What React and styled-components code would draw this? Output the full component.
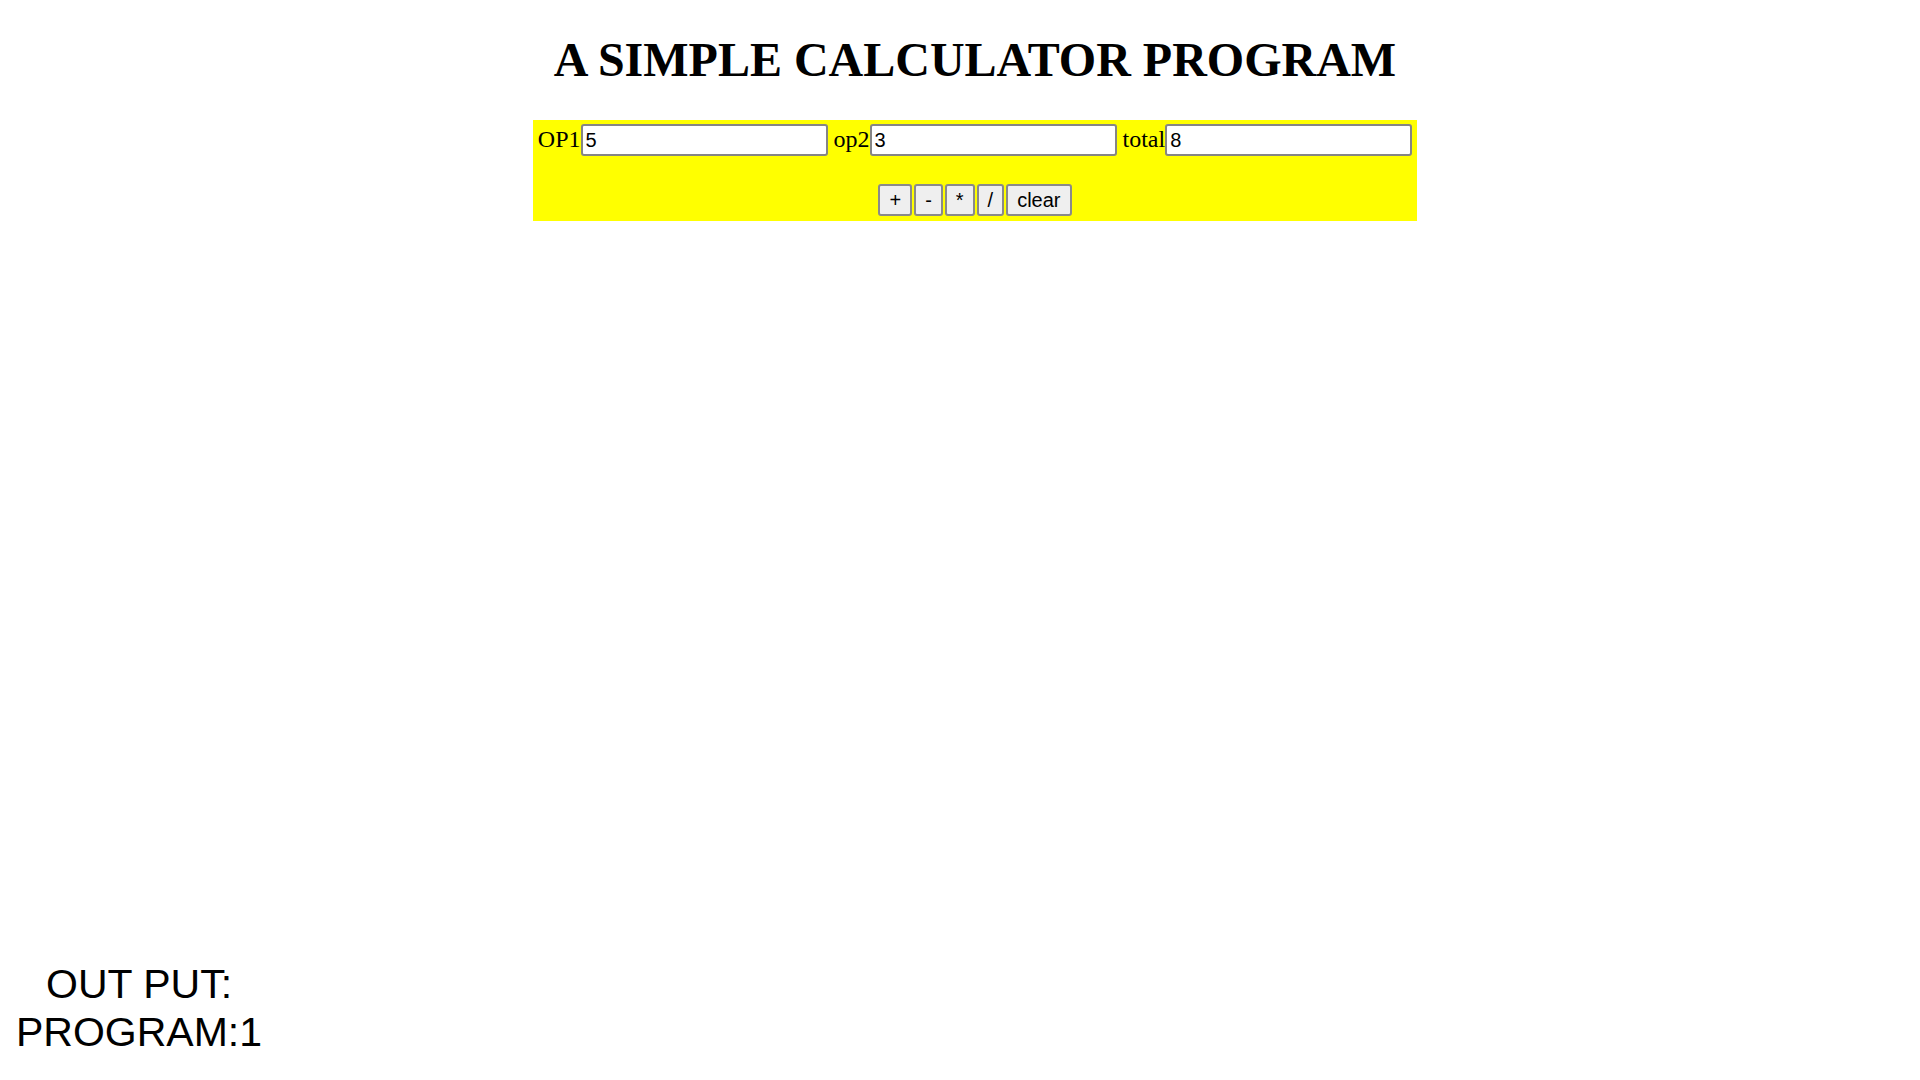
import React, { useState } from "react";
import styled, { createGlobalStyle } from "styled-components";

const GlobalStyle = createGlobalStyle`
  html, body {
    margin: 0;
    padding: 0;
    background: #ffffff;
  }
  body {
    font-family: "Liberation Serif", "Times New Roman", serif;
    color: #000000;
  }
  * { box-sizing: border-box; }
`;

const Page = styled.div`
  display: flex;
  flex-direction: column;
  min-height: 100vh;
`;

const Main = styled.main`
  display: flex;
  flex-direction: column;
  align-items: center;
  padding-left: 30px;
`;

const Title = styled.h1`
  margin: 32px 0 33px;
  font-family: "Liberation Serif", "Times New Roman", serif;
  font-weight: bold;
  font-size: 48px;
  line-height: 55px;
  text-align: center;
`;

const Panel = styled.form`
  display: flex;
  flex-direction: column;
  align-items: center;
  background: #ffff00;
  padding: 4px 5px 5px;
`;

const FieldRow = styled.div`
  display: flex;
  align-items: baseline;
  gap: 6px;
`;

const Field = styled.label`
  display: inline-flex;
  align-items: baseline;
  font-family: "Liberation Serif", "Times New Roman", serif;
  font-size: 24px;
`;

const TextInput = styled.input`
  width: 247px;
  height: 32px;
  margin: 0;
  padding: 1px 3px;
  border: 2px solid #858585;
  border-radius: 3px;
  background: #ffffff;
  font-family: "Liberation Sans", Arial, sans-serif;
  font-size: 20px;
  color: #000000;
  outline: none;
`;

const ButtonRow = styled.div`
  display: flex;
  justify-content: center;
  gap: 2px;
  margin-top: 28px;
`;

const OpButton = styled.button`
  height: 32px;
  margin: 0;
  padding: 0 9px;
  border: 2px solid #8a8a8a;
  border-radius: 3px;
  background: #efefef;
  font-family: "Liberation Sans", Arial, sans-serif;
  font-size: 20px;
  color: #000000;
  cursor: pointer;
`;

const Footer = styled.footer`
  margin-top: auto;
  padding: 0 0 24px 16px;
`;

const Output = styled.div`
  display: inline-flex;
  flex-direction: column;
  align-items: center;
  font-family: "Liberation Sans", Arial, sans-serif;
  font-size: 41px;
  line-height: 48px;
`;

export default function App() {
  const [op1, setOp1] = useState("5");
  const [op2, setOp2] = useState("3");
  const [total, setTotal] = useState("8");

  const calc = (fn) => (e) => {
    e.preventDefault();
    const a = parseFloat(op1);
    const b = parseFloat(op2);
    setTotal(String(fn(a, b)));
  };

  const clear = (e) => {
    e.preventDefault();
    setOp1("");
    setOp2("");
    setTotal("");
  };

  return (
    <Page>
      <GlobalStyle />
      <Main>
        <Title>A SIMPLE CALCULATOR PROGRAM</Title>
        <Panel onSubmit={(e) => e.preventDefault()}>
          <FieldRow>
            <Field>
              OP1
              <TextInput value={op1} onChange={(e) => setOp1(e.target.value)} />
            </Field>
            <Field>
              op2
              <TextInput value={op2} onChange={(e) => setOp2(e.target.value)} />
            </Field>
            <Field>
              total
              <TextInput value={total} onChange={(e) => setTotal(e.target.value)} />
            </Field>
          </FieldRow>
          <ButtonRow>
            <OpButton onClick={calc((a, b) => a + b)}>+</OpButton>
            <OpButton onClick={calc((a, b) => a - b)}>-</OpButton>
            <OpButton onClick={calc((a, b) => a * b)}>*</OpButton>
            <OpButton onClick={calc((a, b) => a / b)}>/</OpButton>
            <OpButton onClick={clear}>clear</OpButton>
          </ButtonRow>
        </Panel>
      </Main>
      <Footer>
        <Output>
          <span>OUT PUT:</span>
          <span>PROGRAM:1</span>
        </Output>
      </Footer>
    </Page>
  );
}
